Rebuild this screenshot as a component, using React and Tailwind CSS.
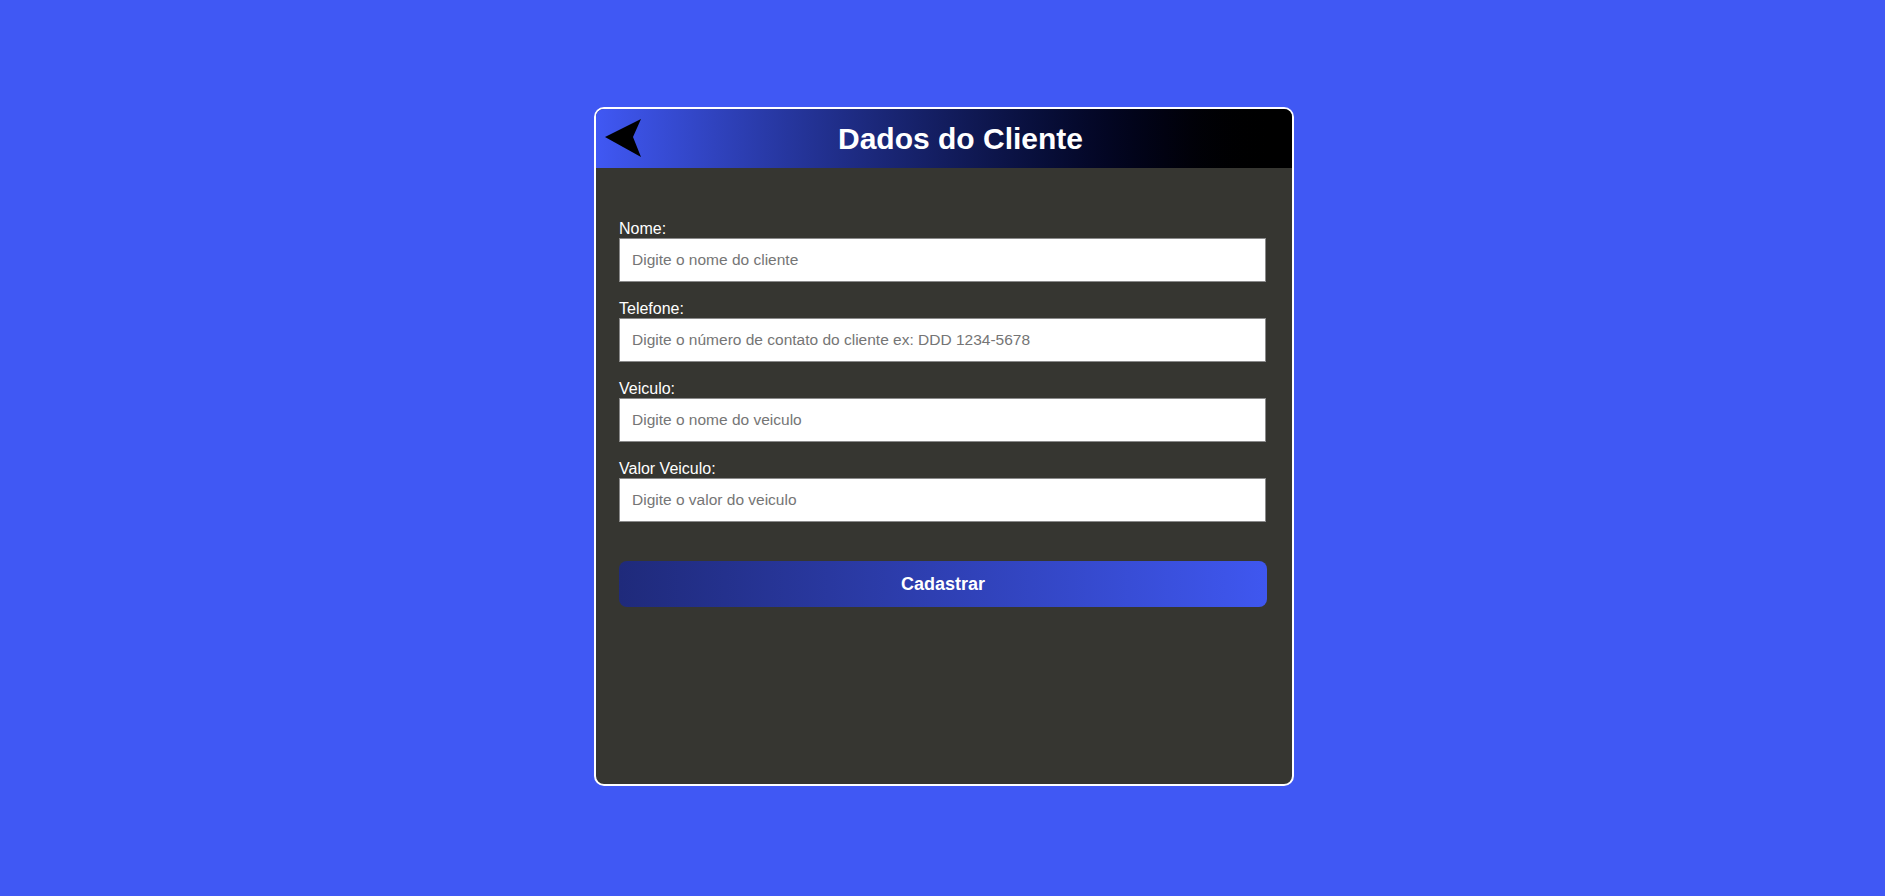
import React from 'react';

const fields = [
  { label: 'Nome:', placeholder: 'Digite o nome do cliente' },
  { label: 'Telefone:', placeholder: 'Digite o número de contato do cliente ex: DDD 1234-5678' },
  { label: 'Veiculo:', placeholder: 'Digite o nome do veiculo' },
  { label: 'Valor Veiculo:', placeholder: 'Digite o valor do veiculo' },
];

const App = () => {
  return (
    <div
      className="min-h-screen w-full bg-[#4058f4] flex items-start justify-center pt-[107px]"
      style={{ fontFamily: '"Liberation Sans", Arial, sans-serif' }}
    >
      <div className="ml-[3px] w-[700px] h-[679px] border-2 border-white rounded-[10px] bg-[#363631] overflow-hidden flex flex-col">
        <div className="h-[59px] flex items-center px-[8px] bg-gradient-to-r from-[#4058f4] to-black">
          <button className="w-[38px] h-[40px] flex items-center justify-center shrink-0">
            <svg width="38" height="40" viewBox="0 0 38 40">
              <polygon points="1,18 37,0 29,18 37,38" fill="#000" />
            </svg>
          </button>
          <h1 className="flex-1 text-center pr-[5px] text-white font-bold text-[30px] leading-none">
            Dados do Cliente
          </h1>
        </div>

        <form className="flex flex-col px-[23px] pt-[52px]" onSubmit={(e) => e.preventDefault()}>
          {fields.map((f) => (
            <div key={f.label} className="flex flex-col mb-[18px]">
              <label className="text-white text-[16px] leading-[18px]">{f.label}</label>
              <input
                type="text"
                placeholder={f.placeholder}
                className="w-[647px] h-[44px] bg-white border border-[#8a8a8a] px-[12px] text-[15.5px] text-black placeholder:text-[#757575] outline-none"
              />
            </div>
          ))}
          <button
            type="submit"
            className="mt-[21px] w-[648px] h-[46px] rounded-[8px] bg-gradient-to-r from-[#1f2a7b] to-[#3f57f0] text-white font-bold text-[18px]"
          >
            Cadastrar
          </button>
        </form>
      </div>
    </div>
  );
};

export default App;
